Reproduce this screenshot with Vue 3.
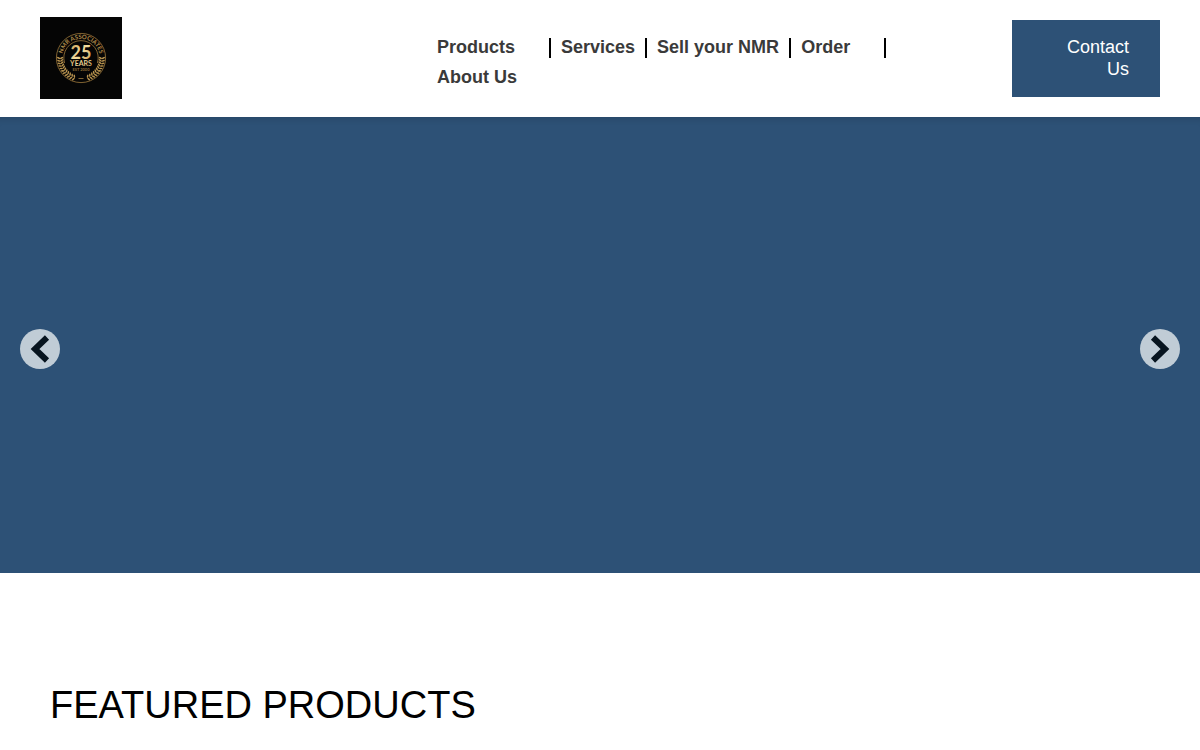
<template>
	<header class="header">
		<a class="logo" href="#" aria-label="NMR Associates">
			<svg viewBox="0 0 82 82" width="82" height="82">
				<defs>
					<linearGradient id="gold" x1="0" y1="0" x2="1" y2="1">
						<stop offset="0" stop-color="#c99a4b" />
						<stop offset="0.5" stop-color="#f3dda0" />
						<stop offset="1" stop-color="#c4954a" />
					</linearGradient>
					<path id="ring" d="M22.5 44 A18.8 18.8 0 1 1 59.5 44" />
				</defs>
				<rect width="82" height="82" fill="#050505" />
				<circle class="line" cx="41" cy="41" r="24.6" />
				<path class="line" d="M24.6 46 A17.2 17.2 0 1 1 57.4 46" />
				<text class="name">
					<textPath href="#ring" startOffset="50%">NMR ASSOCIATES</textPath>
				</text>
				<text class="number" x="41" y="42">25</text>
				<text class="years" x="41" y="49">YEARS</text>
				<text class="est" x="41" y="54">EST 2000</text>
				<g v-for="side in [1, -1]" :key="side">
					<g
						v-for="angle in leaves"
						:key="angle"
						:transform="`translate(41 41) scale(${side} 1) rotate(${angle})`"
					>
						<ellipse class="leaf" cx="22.4" cy="0" rx="1.8" ry="0.8" transform="rotate(-28 22.4 0)" />
						<ellipse class="leaf" cx="19.4" cy="0" rx="1.8" ry="0.8" transform="rotate(28 19.4 0)" />
					</g>
				</g>
				<path class="line" d="M38.500 61.500H43.500" />
			</svg>
		</a>
		<nav class="menu">
			<a
				v-for="item in menu"
				:key="item.label"
				class="menu-item"
				:class="{ 'has-sub': item.sub, last: item.last }"
				href="#"
			>{{ item.label }}</a>
		</nav>
		<a class="contact" href="#">Contact Us</a>
	</header>
	<main>
		<section class="slider">
			<button class="arrow" type="button" aria-label="Previous">
				<svg viewBox="0 0 40 40" width="40" height="40">
					<path d="M27 8.500L15 20L27 31.500" />
				</svg>
			</button>
			<button class="arrow" type="button" aria-label="Next">
				<svg viewBox="0 0 40 40" width="40" height="40">
					<path d="M13 8.500L25 20L13 31.500" />
				</svg>
			</button>
		</section>
		<section class="featured">
			<h2 class="title">FEATURED PRODUCTS</h2>
		</section>
	</main>
</template>

<script setup>
const menu = [
	{ label: "Products", sub: true },
	{ label: "Services" },
	{ label: "Sell your NMR" },
	{ label: "Order", sub: true },
	{ label: "About Us", last: true },
];
// angles of the laurel leaves, in degrees below the horizontal
const leaves = [0, 7, 14, 21, 28, 35, 42, 49, 56, 63, 70];
</script>

<style>
body {
	margin: 0;
	background: #fff;
	font-family: "Liberation Sans", Arial, sans-serif;
}
</style>

<style scoped>
.header {
	display: flex;
	align-items: center;
	padding: 17px 40px 18px;
}
.logo {
	flex: 0 0 387px;
}
.logo svg {
	display: block;
}
.line {
	fill: none;
	stroke: #a07a3c;
	stroke-width: 0.8;
}
.leaf {
	fill: #b8934f;
}
.logo text {
	fill: url(#gold);
	text-anchor: middle;
	font-family: Lato, sans-serif;
	font-weight: 700;
}
.logo .name {
	fill: #b08a48;
	font-size: 6px;
}
.logo .number {
	font-size: 18px;
}
.logo .years {
	font-size: 7px;
}
.logo .est {
	fill: #8a6a35;
	font-size: 4px;
}
.menu {
	display: flex;
	flex: 1;
	flex-wrap: wrap;
	padding-right: 40px;
}
.menu-item {
	margin-top: 10px;
	padding: 0 10px 2px;
	border-right: 2px solid #000;
	color: #3a3a3a;
	font-size: 18px;
	font-weight: 700;
	line-height: 18px;
	text-decoration: none;
}
.menu-item.has-sub {
	padding-right: 34px;
}
.menu-item.last {
	border-right: 0;
}
.contact {
	box-sizing: border-box;
	flex: 0 0 148px;
	padding: 16px 31px 17px 40px;
	background: #2d5176;
	color: #fff;
	font-size: 18px;
	line-height: 22px;
	text-align: right;
	text-decoration: none;
}
.slider {
	display: flex;
	align-items: center;
	justify-content: space-between;
	min-height: 448px;
	padding: 8px 20px 0;
	background: #2d5176;
	box-shadow: inset 0 8px 8px -8px rgba(0, 0, 0, 0.2);
}
.arrow {
	padding: 0;
	border: 0;
	border-radius: 50%;
	background: #c0ccd6;
	cursor: pointer;
}
.arrow svg {
	display: block;
}
.arrow path {
	fill: none;
	stroke: #07141f;
	stroke-width: 6;
}
.featured {
	padding: 108px 50px 20px;
}
.title {
	margin: 0;
	color: #000;
	font-size: 38px;
	font-weight: 400;
	line-height: 48px;
}
</style>
